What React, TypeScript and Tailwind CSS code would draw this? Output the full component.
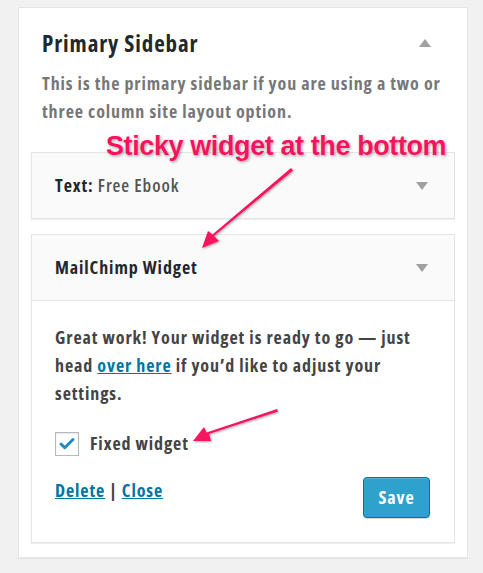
import { Check } from "lucide-react";

function Caret({ up }: { up?: boolean }) {
    return (
        <svg width="12" height="8" viewBox="0 0 12 8" className="fill-[#a0a0a0]">
            {up ? <path d="M0 8 L6 0 L12 8 Z" /> : <path d="M0 0 L12 0 L6 8 Z" />}
        </svg>
    );
}

export default function App() {
    return (
        <div className="relative w-[483px] h-[573px] bg-[#f1f1f1] pt-[7px] pl-[18px] overflow-hidden font-['Open_Sans',sans-serif] [font-stretch:75%] font-bold tracking-[0.9px]">
            {/* Sidebar panel */}
            <div className="w-[450px] h-[551px] bg-white border border-[#e5e5e5] shadow-[0_1px_1px_rgba(0,0,0,0.04)] px-[12px] pt-[20px]">
                <div className="flex items-center justify-between pl-[11px] pr-[24px]">
                    <h2 className="text-[23px] text-[#23282d] leading-[30px]">Primary Sidebar</h2>
                    <Caret up />
                </div>
                <p className="pl-[11px] pr-[8px] mt-[11px] text-[18px] text-[#777] leading-[28px]">
                    This is the primary sidebar if you are using a two or three column site layout option.
                </p>

                {/* Widget: Text */}
                <div className="mt-[27px] h-[67px] bg-[#fafafa] border border-[#e5e5e5] shadow-[0_1px_1px_rgba(0,0,0,0.06)] flex items-center justify-between pl-[23px] pr-[26px]">
                    <span className="text-[18px] text-[#23282d]">
                        Text:<span className="font-semibold text-[#555]"> Free Ebook</span>
                    </span>
                    <Caret />
                </div>

                {/* Widget: MailChimp */}
                <div className="mt-[15px] border border-[#e5e5e5] shadow-[0_1px_1px_rgba(0,0,0,0.06)]">
                    <div className="h-[66px] bg-[#fafafa] border-b border-[#e5e5e5] flex items-center justify-between pl-[23px] pr-[26px]">
                        <span className="text-[18px] text-[#23282d]">MailChimp Widget</span>
                        <Caret />
                    </div>
                    <div className="bg-white pl-[23px] pr-[24px] pt-[22px] pb-[24px]">
                        <p className="text-[18px] text-[#444] leading-[28px]">
                            Great work! Your widget is ready to go — just head{" "}
                            <a href="#" className="text-[#0074a2] underline">over here</a> if you’d like to adjust your settings.
                        </p>
                        <label className="mt-[23px] flex items-center gap-[11px]">
                            <span className="w-[24px] h-[24px] border border-[#b4b9be] bg-white shadow-[inset_0_1px_2px_rgba(0,0,0,0.1)] flex items-center justify-center">
                                <Check className="w-[18px] h-[18px] text-[#1e8cbe]" strokeWidth={4} />
                            </span>
                            <span className="text-[18px] text-[#444]">Fixed widget</span>
                        </label>
                        <div className="mt-[18px] flex items-start justify-between">
                            <div className="mt-[2px] text-[18px] text-[#444]">
                                <a href="#" className="text-[#0074a2] underline">Delete</a> | <a href="#" className="text-[#0074a2] underline">Close</a>
                            </div>
                            <button className="mt-[2px] w-[67px] h-[41px] rounded-[4px] bg-[#2ea2cc] border border-[#0074a2] text-white text-[18px] shadow-[inset_0_1px_0_rgba(120,200,230,0.5),0_1px_0_rgba(0,0,0,0.15)]">
                                Save
                            </button>
                        </div>
                    </div>
                </div>
            </div>

            {/* Annotations */}
            <div className="absolute left-[106px] top-[131px] font-['Liberation_Sans',Arial,sans-serif] [font-stretch:100%] tracking-[-0.4px] text-[27px] font-bold text-[#f5125f] leading-[30px] [text-shadow:0_0_2px_#fff,1px_1px_3px_rgba(0,0,0,0.45)]">
                Sticky widget at the bottom
            </div>
            <svg className="absolute left-0 top-0 pointer-events-none" width="483" height="573" viewBox="0 0 483 573">
                <defs>
                    <filter id="sh" x="-20%" y="-20%" width="140%" height="140%">
                        <feDropShadow dx="1" dy="1" stdDeviation="1.2" floodColor="#000" floodOpacity="0.35" />
                    </filter>
                </defs>
                <g fill="#f5125f" filter="url(#sh)">
                    <path d="M291 168 L293 170.5 L214 236 L219 241 L202 248 L208 231 L212.5 234.5 Z" />
                    <path d="M277 409 L278 411.5 L209 434 L211 441 L193 441 L204 427 L206.5 432.5 Z" />
                </g>
            </svg>
        </div>
    );
}
